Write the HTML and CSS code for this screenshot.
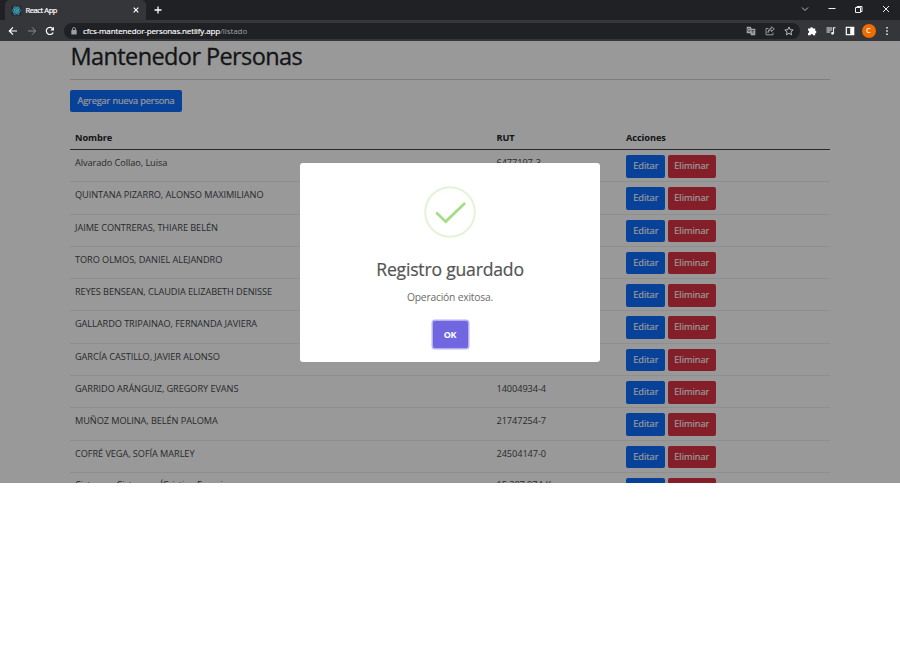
FILE: index.html
```html
<!DOCTYPE html>
<html lang="es">
<head>
<meta charset="utf-8">
<title>React App</title>
<link rel="stylesheet" href="styles.css">
</head>
<body>
<header class="browser">
  <div class="tabs">
    <div class="tab">
      <svg class="react" viewBox="0 0 12 12"><rect x=".5" y=".5" width="11" height="11" rx="1" fill="#202b30"/><g fill="none" stroke="#46b2cf" stroke-width=".8"><ellipse cx="6" cy="6" rx="4.8" ry="1.8"/><ellipse cx="6" cy="6" rx="4.8" ry="1.8" transform="rotate(60 6 6)"/><ellipse cx="6" cy="6" rx="4.8" ry="1.8" transform="rotate(120 6 6)"/></g><circle cx="6" cy="6" r="1" fill="#46b2cf"/></svg>
      <span class="tab-title">React App</span>
      <svg class="close" viewBox="0 0 6 6"><path d="M.7.7l4.6 4.6M5.3.7L.7 5.3" stroke="#fff" stroke-width="1.2"/></svg>
    </div>
    <svg class="plus" viewBox="0 0 8 8"><path d="M4 .5v7M.5 4h7" stroke="#fff" stroke-width="1.3"/></svg>
    <div class="window-buttons">
      <svg viewBox="0 0 10 10"><path d="M2 2.5l3 3 3-3" fill="none" stroke="#ccc" stroke-width=".9"/></svg>
      <svg viewBox="0 0 10 10"><path d="M1.5 3.5h7" stroke="#eee"/></svg>
      <svg viewBox="0 0 10 10"><path d="M1.5 2.5h5v5h-5zM3 2.2V1.5h5v5H7" fill="none" stroke="#eee"/></svg>
      <svg viewBox="0 0 10 10"><path d="M2 1l6 6M8 1L2 7" stroke="#eee"/></svg>
    </div>
  </div>
  <div class="toolbar">
    <svg class="nav" viewBox="0 0 10 10"><path d="M9 5H1.5M5 1.3L1.3 5 5 8.7" fill="none" stroke="#fff" stroke-width="1.2"/></svg>
    <svg class="nav" viewBox="0 0 10 10"><path d="M1 5h7.5M5 1.3L8.7 5 5 8.7" fill="none" stroke="#8b8c8f"/></svg>
    <svg class="nav" viewBox="0 0 10 10"><path d="M8.2 6.4A3.6 3.6 0 1 1 7.6 2.5" fill="none" stroke="#fff" stroke-width="1.2"/><path d="M9 .8v3.7H5.3z" fill="#fff"/></svg>
    <div class="address">
      <svg class="lock" viewBox="0 0 6 8"><path d="M1.5 3.5V2a1.5 1.5 0 0 1 3 0v1.5" fill="none" stroke="#9aa0a6" stroke-width=".9"/><rect x=".3" y="3" width="5.4" height="4.5" rx=".5" fill="#9aa0a6"/></svg>
      <span class="url"><b>cfcs-mantenedor-personas.netlify.app</b>/listado</span>
      <svg class="tool" viewBox="0 0 10 10"><path d="M.7.7h4l1 2h3.6v6.6H5l-.8-2H.7z" fill="#a3a6aa"/><path d="M4.2 3.1A1.5 1.5 0 1 0 4.4 4.5H3M5.4 4.5h3M7 4v.6c0 1-.6 2-1.5 2.5M5.8 5.4L8 7.8" fill="none" stroke="#292a2d" stroke-width=".6"/></svg>
      <svg class="tool" viewBox="0 0 10 10"><path d="M3.5 2.5H1v6.3h7V6.7M3 6.7C3.3 4.7 4.6 3.8 6.3 3.8V5.6L9.3 3 6.3.8v1.6C4.3 2.6 3 4.3 3 6.7z" fill="none" stroke="#b2b5b8" stroke-width=".8"/></svg>
      <svg class="tool" viewBox="0 0 10 10"><path d="M5 1l1.2 2.7 3 .3-2.3 1.9.7 2.9L5 7.3 2.4 8.8l.7-2.9L.8 4l3-.3z" fill="none" stroke="#c9cbcd" stroke-width=".9"/></svg>
    </div>
    <div class="extensions">
      <svg viewBox="0 0 10 10"><path d="M1 2.5h2.3a1.3 1.3 0 1 1 2.6 0h2.3v2.3a1.2 1.2 0 1 1 0 2.4v2.1H6a1.2 1.2 0 0 0-2.4 0H1V7a1.2 1.2 0 0 0 0-2.4z" fill="#fff"/></svg>
      <svg viewBox="0 0 10 10"><path d="M.5 2h5.7M.5 4h5.7M.5 6h3.7M7.5 7.5V1.8h2" fill="none" stroke="#eee" stroke-width="1.1"/><circle cx="6.5" cy="7.3" r="1.4" fill="#eee"/></svg>
      <svg viewBox="0 0 10 10"><path d="M1.3 1.3h7.4v7.4H1.3z" fill="none" stroke="#fff" stroke-width="1.2"/><path d="M5.2 1h3.6v8H5.2z" fill="#fff"/></svg>
      <span class="avatar">C</span>
      <svg viewBox="0 0 10 10"><path d="M4.2 1h1.6v1.6H4.2zM4.2 4.2h1.6v1.6H4.2zM4.2 7.4h1.6V9H4.2z" fill="#eee"/></svg>
    </div>
  </div>
</header>
<main class="page">
  <div class="container">
    <h1>Mantenedor Personas</h1>
    <hr>
    <button class="btn primary add">Agregar nueva persona</button>
    <div class="row head"><span>Nombre</span><span>RUT</span><span>Acciones</span></div>
    <div class="row"><span>Alvarado Collao, Luisa</span><span>6477197-3</span><div class="actions"><button class="btn primary">Editar</button><button class="btn danger">Eliminar</button></div></div>
    <div class="row"><span>QUINTANA PIZARRO, ALONSO MAXIMILIANO</span><span></span><div class="actions"><button class="btn primary">Editar</button><button class="btn danger">Eliminar</button></div></div>
    <div class="row"><span>JAIME CONTRERAS, THIARE BELÉN</span><span></span><div class="actions"><button class="btn primary">Editar</button><button class="btn danger">Eliminar</button></div></div>
    <div class="row"><span>TORO OLMOS, DANIEL ALEJANDRO</span><span></span><div class="actions"><button class="btn primary">Editar</button><button class="btn danger">Eliminar</button></div></div>
    <div class="row"><span>REYES BENSEAN, CLAUDIA ELIZABETH DENISSE</span><span></span><div class="actions"><button class="btn primary">Editar</button><button class="btn danger">Eliminar</button></div></div>
    <div class="row"><span>GALLARDO TRIPAINAO, FERNANDA JAVIERA</span><span></span><div class="actions"><button class="btn primary">Editar</button><button class="btn danger">Eliminar</button></div></div>
    <div class="row"><span>GARCÍA CASTILLO, JAVIER ALONSO</span><span></span><div class="actions"><button class="btn primary">Editar</button><button class="btn danger">Eliminar</button></div></div>
    <div class="row"><span>GARRIDO ARÁNGUIZ, GREGORY EVANS</span><span>14004934-4</span><div class="actions"><button class="btn primary">Editar</button><button class="btn danger">Eliminar</button></div></div>
    <div class="row"><span>MUÑOZ MOLINA, BELÉN PALOMA</span><span>21747254-7</span><div class="actions"><button class="btn primary">Editar</button><button class="btn danger">Eliminar</button></div></div>
    <div class="row"><span>COFRÉ VEGA, SOFÍA MARLEY</span><span>24504147-0</span><div class="actions"><button class="btn primary">Editar</button><button class="btn danger">Eliminar</button></div></div>
    <div class="row last"><span>Cisternas Cisternas, ÍCristian Francisco</span><span>15.287.974-K</span><div class="actions"><button class="btn primary" aria-label="Editar"></button><button class="btn danger" aria-label="Eliminar"></button></div></div>
  </div>
  <div class="overlay">
    <section class="modal">
      <svg class="success" viewBox="0 0 52 52"><circle cx="26" cy="26" r="24.8" fill="none" stroke="#e2f3d8" stroke-width="2"/><path d="M13 27.2l8.7 8.4L40.3 17.8" fill="none" stroke="#a5dc86" stroke-width="2.7" stroke-linecap="round"/></svg>
      <h2>Registro guardado</h2>
      <p>Operación exitosa.</p>
      <button class="ok">OK</button>
    </section>
  </div>
</main>
</body>
</html>
```

FILE: styles.css
```css
* { box-sizing: border-box; }
body { margin: 0; background: #fff; font-family: "Open Sans", "Noto Sans", sans-serif; overflow: hidden; }
svg { display: block; flex: none; }
button { font-family: inherit; }

.browser { height: 41px; background: #35363a; color: #fff; }
.tabs { height: 20px; background: #202124; display: flex; align-items: center; padding-left: 5px; }
.tab { width: 141px; height: 20px; background: #35363a; border-radius: 5px 5px 0 0; display: flex; align-items: center; padding: 0 7px 0 6px; }
.react { width: 11px; height: 11px; }
.tab-title { font-size: 7.5px; letter-spacing: -.4px; margin-left: 3.5px; flex: 1; line-height: 20px; -webkit-text-stroke: .2px currentColor; }
.close { width: 6px; height: 6px; }
.plus { width: 8px; height: 8px; margin-left: 8px; }
.window-buttons { margin-left: auto; display: flex; gap: 17px; padding-right: 9px; }
.window-buttons svg { width: 10px; height: 10px; }
.toolbar { height: 21px; display: flex; align-items: center; padding-left: 8px; }
.nav { width: 10px; height: 10px; margin-right: 9px; }
.nav + .nav { margin-left: -.5px; }
.address { width: 736px; height: 16px; border-radius: 8px; background: #202124; display: flex; align-items: center; padding: 0 6px 0 7px; gap: 9px; }
.lock { width: 6px; height: 8px; margin-right: -3px; }
.url { flex: 1; font-size: 8px; color: #9aa0a6; letter-spacing: -.08px; white-space: nowrap; }
.url b { font-weight: 400; color: #fff; letter-spacing: -.13px; -webkit-text-stroke: .15px currentColor; }
.tool { width: 10px; height: 10px; }
.extensions { display: flex; align-items: center; gap: 9px; margin-left: 6.5px; }
.extensions svg { width: 10px; height: 10px; }
.extensions svg:last-child { margin-left: -1px; }
.avatar { width: 14px; height: 14px; border-radius: 50%; background: #ef6c00; font-size: 7px; line-height: 14px; text-align: center; margin: 0 -2px; -webkit-text-stroke: .2px currentColor; }

.page { position: relative; height: 442px; overflow: hidden; color: #212529; }
.container { width: 760px; margin-left: 70px; }
h1 { margin: 0; height: 38px; padding-left: .5px; font-size: 23.5px; letter-spacing: -.6px; line-height: 31px; font-weight: 500; white-space: nowrap; -webkit-text-stroke: .3px currentColor; }
hr { margin: 0 0 10px; border: 0; height: 1px; background: #d2d3d4; }
.btn { display: block; height: 22.5px; border: 0; border-radius: 2px; padding: 0; font-size: 9.2px; line-height: 22.5px; color: #fff; width: 39px; -webkit-text-stroke: .15px currentColor; }
.primary { background: #0d6efd; }
.danger { background: #dc3545; width: 48px; }
.btn.add { width: 112px; height: 22px; margin-bottom: 15px; letter-spacing: -.12px; }
.row { display: grid; grid-template-columns: 421.5px 129.5px 1fr; height: 32.3px; padding: 5px 5px 0; border-bottom: 1px solid #eceeef; font-size: 9.2px; letter-spacing: -.07px; line-height: 15px; white-space: nowrap; color: #43474b; }
.head { height: 23px; padding-top: 4px; line-height: 14px; font-weight: 700; color: #212529; border-bottom-color: #41474c; }
.last { line-height: 14px; }
.actions { display: flex; gap: 2.5px; padding-left: .3px; letter-spacing: 0; }

.overlay { position: absolute; inset: 0; background: rgba(0, 0, 0, .4); }
.modal { width: 300px; height: 199px; margin: 122px auto 0; background: #fff; border-radius: 3px; padding-top: 23px; display: flex; flex-direction: column; align-items: center; color: #545454; }
.success { width: 52px; height: 52px; }
h2 { margin: 18px 0 0; font-size: 17.6px; letter-spacing: -.2px; line-height: 26px; font-weight: 500; white-space: nowrap; -webkit-text-stroke: .2px currentColor; }
.modal p { margin: 7px 0 0; font-size: 10.3px; letter-spacing: -.2px; line-height: 16px; color: #6b6b6b; }
.ok { width: 35px; height: 27px; margin-top: 16px; border: 0; border-radius: 2px; background: #7066e0; color: #fff; font-size: 9px; letter-spacing: -.2px; font-weight: 700; padding: 0; box-shadow: 0 0 0 1.5px rgba(112, 102, 224, .5); }
```
